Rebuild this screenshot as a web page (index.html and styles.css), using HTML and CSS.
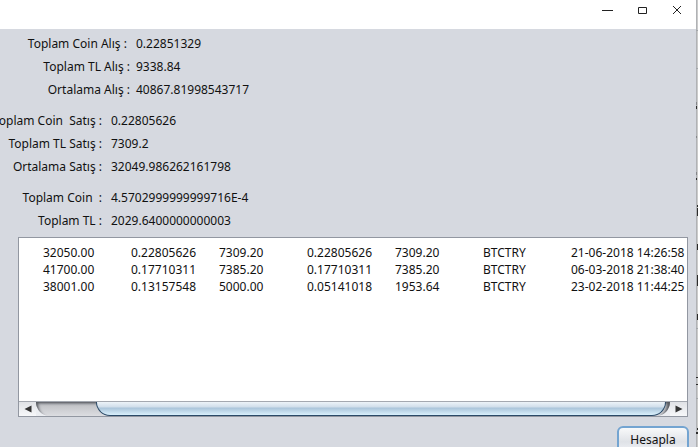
FILE: index.html
```html
<!DOCTYPE html>
<html lang="tr">
<head>
<meta charset="utf-8">
<title>Hesapla</title>
<link rel="stylesheet" href="styles.css">
</head>
<body>
<div class="desktop">
<main class="window">
  <header class="titlebar">
    <button class="winbtn" aria-label="Simge durumuna küçült"><svg width="12" height="12" viewBox="0 0 12 12"><path d="M1 6.500h11"/></svg></button>
    <button class="winbtn" aria-label="Ekranı kapla"><svg width="12" height="12" viewBox="0 0 12 12"><path d="M2.500 3.500h8v6h-8z"/></svg></button>
    <button class="winbtn" aria-label="Kapat"><svg width="12" height="12" viewBox="0 0 12 12"><path d="M2 2l8 8M10 2l-8 8"/></svg></button>
  </header>
  <dl class="totals buy">
    <div class="row"><dt>Toplam Coin Alış :&nbsp;</dt><dd>0.22851329</dd></div>
    <div class="row"><dt>Toplam TL Alış :</dt><dd>9338.84</dd></div>
    <div class="row"><dt>Ortalama Alış :</dt><dd>40867.81998543717</dd></div>
  </dl>
  <dl class="totals">
    <div class="row"><dt>oplam Coin&nbsp; Satış :</dt><dd>0.22805626</dd></div>
    <div class="row"><dt>Toplam TL Satış :</dt><dd>7309.2</dd></div>
    <div class="row"><dt>Ortalama Satış :</dt><dd>32049.986262161798</dd></div>
  </dl>
  <dl class="totals">
    <div class="row"><dt>Toplam Coin&nbsp; :</dt><dd>4.5702999999999716E-4</dd></div>
    <div class="row"><dt>Toplam TL :</dt><dd>2029.6400000000003</dd></div>
  </dl>
  <section class="list">
    <div class="view">
      <table>
        <colgroup><col class="wide"><col class="wide"><col class="wide"><col class="wide"><col class="wide"><col class="wide"><col></colgroup>
        <tbody>
        <tr><td>32050.00</td><td>0.22805626</td><td>7309.20</td><td>0.22805626</td><td>7309.20</td><td>BTCTRY</td><td>21-06-2018 14:26:58</td></tr>
        <tr><td>41700.00</td><td>0.17710311</td><td>7385.20</td><td>0.17710311</td><td>7385.20</td><td>BTCTRY</td><td>06-03-2018 21:38:40</td></tr>
        <tr><td>38001.00</td><td>0.13157548</td><td>5000.00</td><td>0.05141018</td><td>1953.64</td><td>BTCTRY</td><td>23-02-2018 11:44:25</td></tr>
        </tbody>
      </table>
    </div>
    <div class="scrollbar">
      <button class="arrow" aria-label="Sola kaydır"><svg width="8" height="8" viewBox="0 0 8 8"><path d="M7.500 .5v7L.5 4z"/></svg></button>
      <div class="track"><div class="thumb"></div></div>
      <button class="arrow" aria-label="Sağa kaydır"><svg width="8" height="8" viewBox="0 0 8 8"><path d="M.5 .5v7l7-3.500z"/></svg></button>
    </div>
  </section>
  <footer class="actions"><button class="calc">Hesapla</button></footer>
</main>
<div class="behind">
  <svg width="2" height="447" viewBox="0 0 2 447">
    <path class="rule" d="M0 30.500h2M0 68.500h2M0 328.500h2M0 398.500h2"/>
    <path class="faint" d="M0 102h1v3H0zM0 136h1v2H0zM0 172h1v3H0z"/>
    <path class="ink" d="M0 106h1v3H0zM0 178h1v2H0zM1 205h1v2H1zM1 208h1v8H1zM1 244h1v6H1zM1 275h1v11H1zM1 314h1v6H1zM0 377h2v1H0zM0 384h2v1H0zM1 428h1v2H1zM0 432h2v2H0z"/>
  </svg>
</div>
</div>
</body>
</html>
```
FILE: styles.css
```css
* { box-sizing: border-box; }
body {
  margin: 0;
  overflow: hidden;
  font: 12px/17px "Noto Sans", sans-serif;
  color: #111;
  background: #d6d9e0;
}
button { padding: 0; border: 0; background: none; font: inherit; color: inherit; }
.desktop { display: flex; height: 100vh; overflow: hidden; }
.window { flex: 1; min-width: 0; background: #d6d9e0; }
.behind { width: 2px; overflow: hidden; background: linear-gradient(90deg, #b0b2b5 50%, #cbcbcb 50%); }
.behind svg { display: block; }
.rule { stroke: #a3a6aa; }
.faint { fill: #85878a; }
.ink { fill: #2c2c2c; }
.titlebar {
  display: flex;
  justify-content: flex-end;
  gap: 23px;
  height: 29px;
  padding: 4px 13px 0 0;
  background: #fff;
}
.winbtn { width: 12px; height: 12px; }
.winbtn svg { display: block; fill: none; stroke: #222; }
.totals { margin: 0 0 8px; }
.buy { padding-top: 3px; }
.row { display: flex; height: 23px; line-height: 23px; white-space: nowrap; }
dt { display: flex; flex: none; justify-content: flex-end; width: 102px; }
.buy dt { width: 130px; }
dd { margin: 0 0 0 9px; }
.buy dd { margin-left: 6px; }
.list { margin: -3px 8px 0 18px; border: 1px solid #9297a1; background: #fff; }
.view { height: 163px; padding: 6px 0 0 24px; overflow: hidden; }
table { width: 100%; table-layout: fixed; border-collapse: collapse; white-space: nowrap; }
.wide { width: 88px; }
td { height: 17px; padding: 0; }
.scrollbar { display: flex; height: 15px; border-top: 1px solid #a4a8b0; background: #eceef2; }
.arrow { display: flex; align-items: center; justify-content: center; width: 17px; background: linear-gradient(#e0e2e6, #f7f8fa); }
.arrow svg { fill: #333; }
.track {
  flex: 1;
  padding-left: 60px;
  border-radius: 0 0 14px 14px;
  background: linear-gradient(#b9babf, #cccdd1 50%, #dcdde1);
  box-shadow: inset 4px 2px 3px -2px #55585e, inset -4px 2px 3px -1px #55585e;
}
.thumb {
  height: 14px;
  margin-right: 4px;
  border: 1px solid #2b4a68;
  border-top: 0;
  border-radius: 0 0 14px 14px;
  background: linear-gradient(#edf3f8, #cfddea 40%, #a9c3d9 45%, #d9f0fc);
}
.actions { display: flex; justify-content: flex-end; padding: 9px 7px 0 0; }
.calc {
  width: 72px;
  height: 27px;
  border: 2px solid #73a4d1;
  border-radius: 6px;
  background: linear-gradient(#f8f9fa, #dfe2e7 60%, #eff1f5);
}
```
